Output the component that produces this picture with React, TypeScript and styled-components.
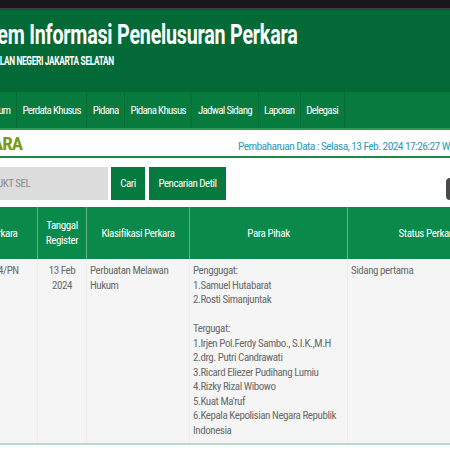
import React, { FC } from 'react';
import styled, { createGlobalStyle } from 'styled-components';

const GlobalStyle = createGlobalStyle`
    html, body {
        margin: 0;
        padding: 0;
        background: #ffffff;
        overflow: hidden;
    }
    body {
        font-family: Roboto, 'Liberation Sans', sans-serif;
        font-stretch: condensed;
    }
`;

const Page = styled.div`
    width: 620px;
    margin-left: -62px;
`;

const TopBar = styled.div`
    height: 8px;
    background: #17171d;
    border-bottom: 2px solid #3b3d3f;
`;

const Header = styled.header`
    background: #036a37;
    height: 82px;
    padding: 9px 0 0 26px;
    box-sizing: border-box;
    color: #ffffff;
    overflow: hidden;
`;

const Title = styled.h1`
    margin: 0;
    font-size: 28px;
    font-weight: 700;
    font-stretch: normal;
    letter-spacing: -0.3px;
    line-height: 32px;
    white-space: nowrap;
    transform: scaleX(0.703);
    transform-origin: left center;
`;

const Subtitle = styled.div`
    font-size: 12.5px;
    font-weight: 700;
    font-stretch: normal;
    letter-spacing: -0.5px;
    line-height: 16px;
    margin: 2px 0 0 3px;
    white-space: nowrap;
    transform: scaleX(0.665);
    transform-origin: left center;
`;

const Nav = styled.nav`
    display: flex;
    background: #077a3e;
    height: 36px;
    padding-left: 11px;
    border-bottom: 2px solid #2f9a58;
`;

const NavItem = styled.a`
    display: flex;
    align-items: center;
    padding: 0 5.5px;
    color: #ffffff;
    font-size: 11px;
    letter-spacing: -0.7px;
    border-right: 1px solid #066b36;
    white-space: nowrap;
`;

const InfoRow = styled.div`
    display: flex;
    justify-content: space-between;
    align-items: flex-end;
    height: 28px;
    box-sizing: border-box;
    padding: 0 0 1px 0;
    border-bottom: 2px solid #1f8a47;
`;

const PageTitle = styled.div`
    color: #7b9a1c;
    font-size: 19px;
    font-weight: 700;
    letter-spacing: -1px;
    line-height: 22px;
    margin-left: -24px;
`;

const UpdateInfo = styled.div`
    color: #2e9bb4;
    font-size: 11.5px;
    letter-spacing: -0.6px;
    padding-bottom: 2px;
    white-space: nowrap;
    width: 320px;
`;

const SearchRow = styled.div`
    display: flex;
    align-items: flex-start;
    gap: 3px;
    padding: 9px 0 0 0;
    height: 42px;
    box-sizing: border-box;
`;

const SearchInput = styled.div`
    width: 170px;
    height: 33px;
    background: #dcdcdc;
    color: #8a8a8a;
    font-size: 11px;
    letter-spacing: -0.5px;
    display: flex;
    align-items: center;
    padding-left: 46px;
    box-sizing: border-box;
    white-space: nowrap;
`;

const Button = styled.button<{ $w: number }>`
    width: ${(p) => p.$w}px;
    height: 33px;
    border: none;
    background: #067a3e;
    color: #ffffff;
    font-family: inherit;
    font-stretch: condensed;
    font-size: 11px;
    letter-spacing: -0.5px;
    padding: 0;
    margin-right: 1px;
`;

const Spacer = styled.div`
    flex: 1;
`;

const Toggle = styled.div`
    width: 14px;
    height: 22px;
    margin-top: 11px;
    background: #4a4a4a;
    border-radius: 4px;
    margin-right: 98px;
`;

const Table = styled.div`
    display: grid;
    grid-template-columns: 100px 49px 103px 158px 160px;
    margin-top: 7px;
    border-bottom: 2px solid #b8dccb;
`;

const HeadCell = styled.div`
    background: #0a8a4a;
    color: #ffffff;
    font-size: 11px;
    letter-spacing: -0.4px;
    line-height: 15px;
    height: 52px;
    display: flex;
    align-items: center;
    justify-content: center;
    text-align: center;
    border-right: 1px solid #5fb583;
    box-sizing: border-box;
`;

const Cell = styled.div<{ $center?: boolean }>`
    background: #f5f5f5;
    color: #6a6a6a;
    font-size: 11px;
    letter-spacing: -0.45px;
    line-height: 14.5px;
    padding: 4px 3px 5px 3px;
    text-align: ${(p) => (p.$center ? 'center' : 'left')};
    border-right: 1px solid #ececec;
    border-top: 1px solid #ffffff;
    white-space: pre-line;
`;

const CaseNo = styled.div`
    white-space: nowrap;
    padding-left: 3px;
`;

const navItems = ['Perdata Umum', 'Perdata Khusus', 'Pidana', 'Pidana Khusus', 'Jadwal Sidang', 'Laporan', 'Delegasi'];

const pihak = `Penggugat:
1.Samuel Hutabarat
2.Rosti Simanjuntak

Tergugat:
1.Irjen Pol.Ferdy Sambo., S.I.K.,M.H
2.drg. Putri Candrawati
3.Ricard Eliezer Pudihang Lumiu
4.Rizky Rizal Wibowo
5.Kuat Ma'ruf
6.Kepala Kepolisian Negara Republik Indonesia`;

const App: FC = () => {
    return (
        <Page>
            <GlobalStyle />
            <TopBar />
            <Header>
                <Title>Sistem Informasi Penelusuran Perkara</Title>
                <Subtitle>PENGADILAN NEGERI JAKARTA SELATAN</Subtitle>
            </Header>
            <Nav>
                {navItems.map((item) => (
                    <NavItem key={item}>{item}</NavItem>
                ))}
            </Nav>
            <InfoRow>
                <PageTitle>DATA PERKARA</PageTitle>
                <UpdateInfo>Pembaharuan Data : Selasa, 13 Feb. 2024 17:26:27 WIB</UpdateInfo>
            </InfoRow>
            <SearchRow>
                <SearchInput>PN JKT SEL</SearchInput>
                <Button $w={34}>Cari</Button>
                <Button $w={77}>Pencarian Detil</Button>
                <Spacer />
                <Toggle />
            </SearchRow>
            <Table>
                <HeadCell>Nomor Perkara</HeadCell>
                <HeadCell>
                    Tanggal
                    <br />
                    Register
                </HeadCell>
                <HeadCell>Klasifikasi Perkara</HeadCell>
                <HeadCell>Para Pihak</HeadCell>
                <HeadCell>Status Perkara</HeadCell>
                <Cell>
                    <CaseNo>78/Pdt.G/2024/PN</CaseNo>
                </Cell>
                <Cell $center>{'13 Feb\n2024'}</Cell>
                <Cell>Perbuatan Melawan Hukum</Cell>
                <Cell>{pihak}</Cell>
                <Cell>Sidang pertama</Cell>
            </Table>
        </Page>
    );
};

export default App;
